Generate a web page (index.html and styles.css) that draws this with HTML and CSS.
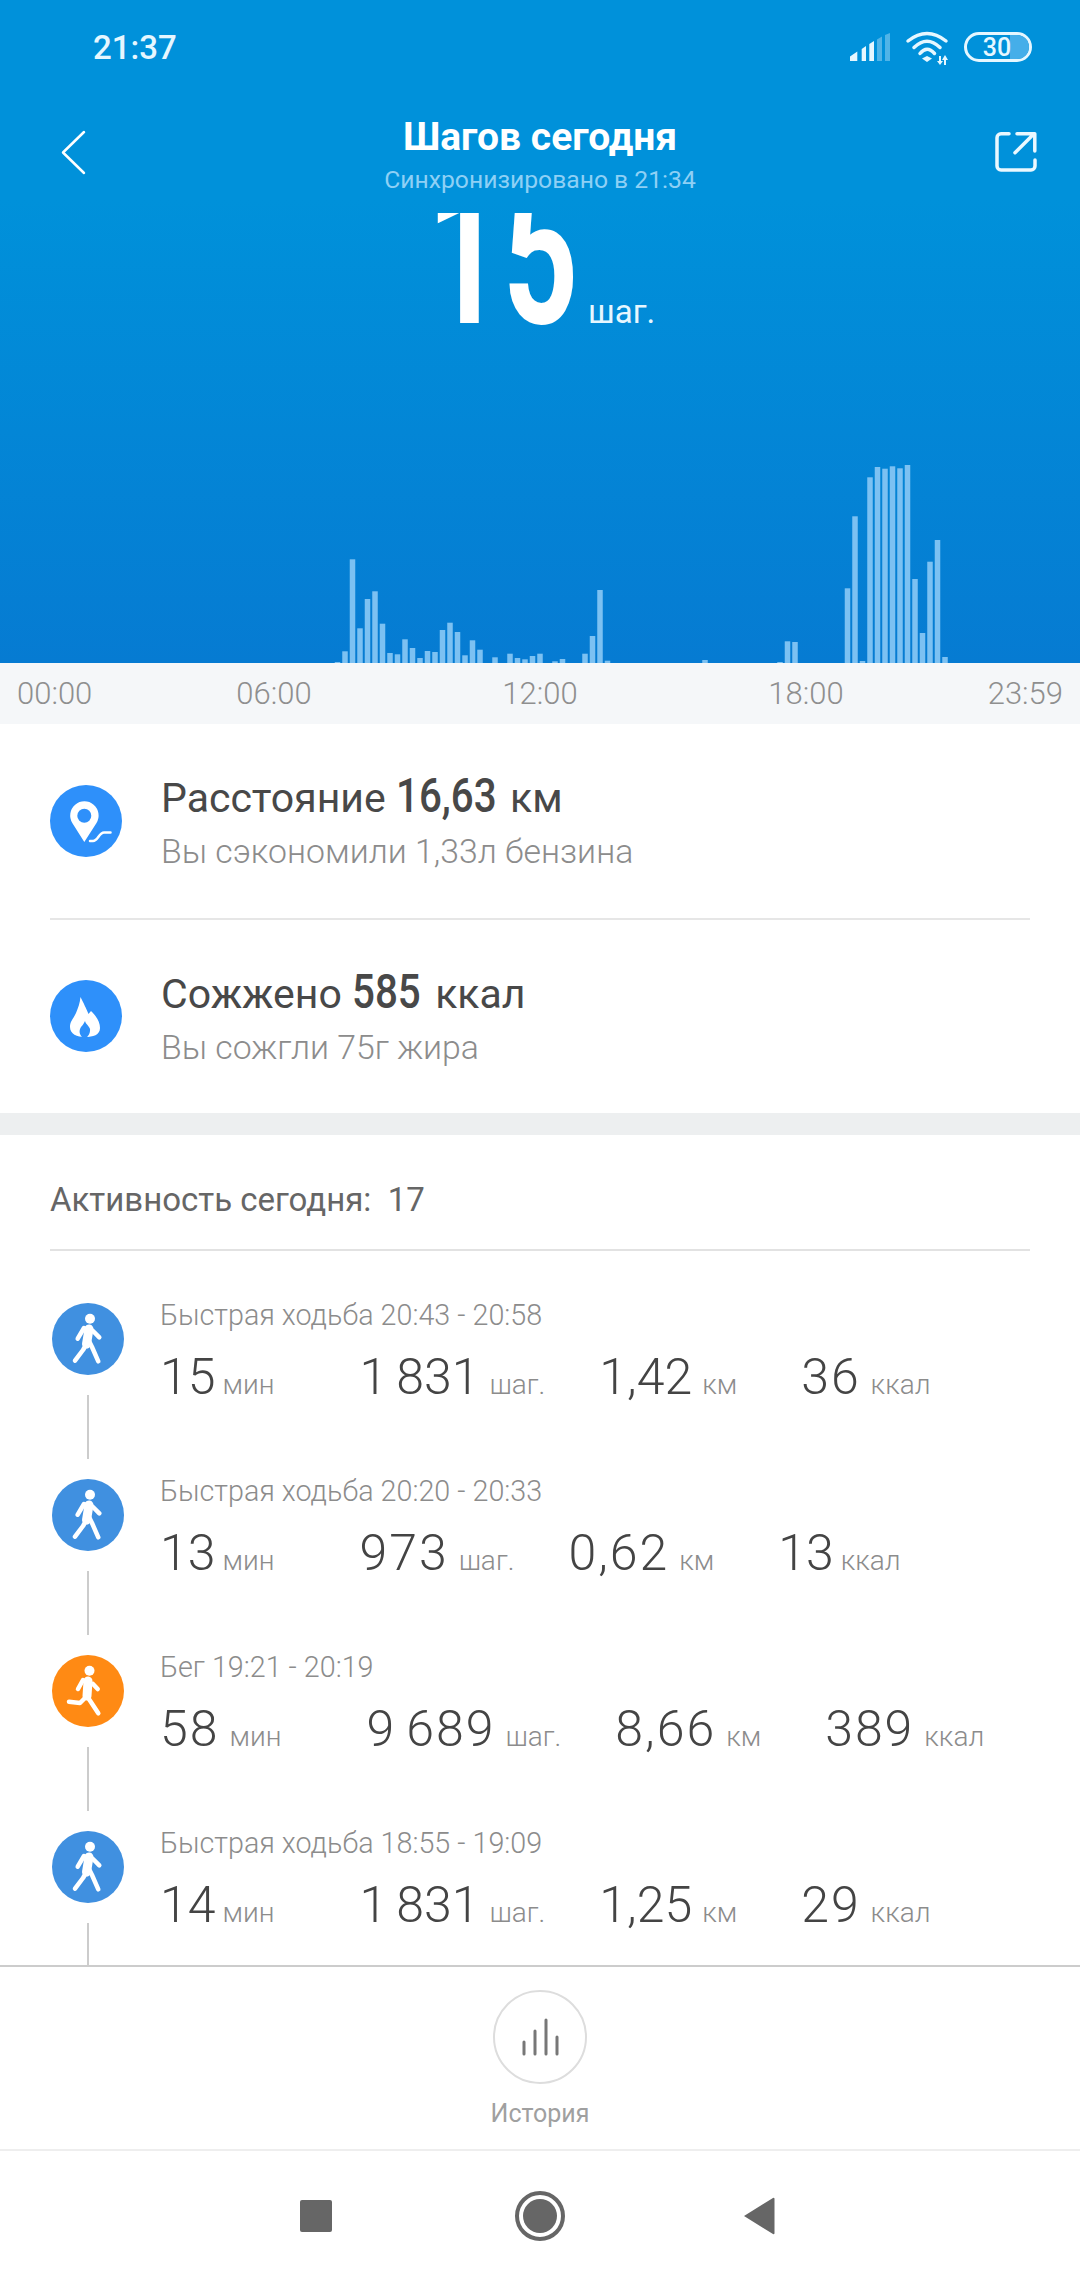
FILE: index.html
```html
<!DOCTYPE html>
<html lang="ru">
<head>
    <meta charset="UTF-8">
    <meta name="viewport" content="width=device-width, initial-scale=1.0">
    <title>Шагов сегодня</title>
    <link rel="stylesheet" href="styles.css">
</head>
<body>
<div class="phone">

    <header class="hero">
        <div class="status">
            <span class="status-time">21:37</span>
            <div class="status-icons">
                <svg class="ic-signal" viewBox="0 0 40 28">
                    <path d="M0 28V23.5L7.3 18.5V28z"/>
                    <path d="M11.7 28V16L16 13V28z"/>
                    <path d="M19.3 28V11L24 8V28z"/>
                    <path class="dim" d="M27 28V6.5L32 3.5V28z"/>
                    <path class="dim" d="M35 28V2L40 0V28z"/>
                </svg>
                <svg class="ic-wifi" viewBox="0 0 44 34">
                    <path class="arc" d="M2 9Q21 -6 40 9"/>
                    <path class="arc" d="M8 15.5Q21 3 34 15.5"/>
                    <path class="arc" d="M14 21.5Q21 13 28.5 21.5"/>
                    <path class="fill" d="M16 26.5L21 24L26 26.5L21 30z"/>
                    <path class="fill" d="M33 24h2v5h2l-3 4l-3 -4h2z"/>
                    <path class="fill" d="M38 33h2v-5h2l-3 -5l-3 5h2z"/>
                </svg>
                <div class="battery"><span class="battery-rest"></span><span class="battery-num">30</span></div>
            </div>
        </div>

        <div class="toolbar">
            <svg class="ic-back" viewBox="0 0 25 45"><path d="M23 2L2 22.5L23 43"/></svg>
            <div class="toolbar-title">
                <h1>Шагов сегодня</h1>
                <p>Синхронизировано в 21:34</p>
            </div>
            <svg class="ic-share" viewBox="0 0 42 42">
                <path d="M14 2.8H6a4 4 0 0 0-4 4V35a4 4 0 0 0 4 4H36a4 4 0 0 0 4-4V29"/>
                <path d="M20 21.7L39 2.8M22 2.8H39.8V20"/>
            </svg>
        </div>

        <div class="count">
            <span class="count-num">15</span>
            <span class="count-unit">шаг.</span>
        </div>

        <svg class="bars" viewBox="0 0 1080 200">
            <g transform="translate(-2.75 0)">
                <rect x="337.5" y="199" height="1"/>
                <rect x="345" y="188.3" height="11.7"/>
                <rect x="352.5" y="96.3" height="103.7"/>
                <rect x="360" y="165.3" height="34.7"/>
                <rect x="367.5" y="136" height="64"/>
                <rect x="375" y="128.3" height="71.7"/>
                <rect x="382.5" y="160.7" height="39.3"/>
                <rect x="390" y="190" height="10"/>
                <rect x="397.5" y="191.3" height="8.7"/>
                <rect x="405" y="176.3" height="23.7"/>
                <rect x="412.5" y="185" height="15"/>
                <rect x="420" y="195" height="5"/>
                <rect x="427.5" y="188" height="12"/>
                <rect x="435" y="189" height="11"/>
                <rect x="442.5" y="167" height="33"/>
                <rect x="450" y="159.7" height="40.3"/>
                <rect x="457.5" y="169" height="31"/>
                <rect x="465" y="192.3" height="7.7"/>
                <rect x="472.5" y="177.3" height="22.7"/>
                <rect x="480" y="186.7" height="13.3"/>
                <rect x="495" y="194.3" height="5.7"/>
                <rect x="510" y="190.7" height="9.3"/>
                <rect x="517.5" y="195" height="5"/>
                <rect x="525" y="196.3" height="3.7"/>
                <rect x="532.5" y="193" height="7"/>
                <rect x="540" y="190.7" height="9.3"/>
                <rect x="555" y="198.3" height="1.7"/>
                <rect x="562.5" y="196" height="4"/>
                <rect x="585" y="190.7" height="9.3"/>
                <rect x="592.5" y="173" height="27"/>
                <rect x="600" y="127" height="73"/>
                <rect x="607.5" y="197.7" height="2.3"/>
                <rect x="705" y="197" height="3"/>
                <rect x="780" y="199" height="1"/>
                <rect x="787.5" y="178.3" height="21.7"/>
                <rect x="795" y="179" height="21"/>
                <rect x="847.5" y="125.3" height="74.7"/>
                <rect x="855" y="53.3" height="146.7"/>
                <rect x="862.5" y="198" height="2"/>
                <rect x="870" y="14.3" height="185.7"/>
                <rect x="877.5" y="4" height="196"/>
                <rect x="885" y="5.7" height="194.3"/>
                <rect x="892.5" y="3.3" height="196.7"/>
                <rect x="900" y="5.3" height="194.7"/>
                <rect x="907.5" y="2" height="198"/>
                <rect x="915" y="116" height="84"/>
                <rect x="922.5" y="170" height="30"/>
                <rect x="930" y="98.7" height="101.3"/>
                <rect x="937.5" y="77" height="123"/>
                <rect x="945" y="194" height="6"/>
            </g>
        </svg>
    </header>

    <div class="axis">
        <span>00:00</span>
        <span>06:00</span>
        <span>12:00</span>
        <span>18:00</span>
        <span>23:59</span>
    </div>

    <section class="stats">
        <div class="stat">
            <svg class="stat-icon" viewBox="0 0 72 72">
                <circle class="disc" cx="36" cy="36" r="36"/>
                <path class="glyph" d="M34.3 57L22.3 38A14.2 14.2 0 1 1 46.5 38z"/>
                <circle class="disc" cx="34.3" cy="30.7" r="7"/>
                <path class="curve" d="M40 56h3c5 0 6-8.5 11-8.5h6.5"/>
            </svg>
            <div>
                <div class="stat-title">Расстояние <b class="val-dist">16,63</b> км</div>
                <div class="stat-sub">Вы сэкономили 1,33л бензина</div>
            </div>
        </div>
        <div class="stat">
            <svg class="stat-icon" viewBox="0 0 72 72">
                <circle class="disc" cx="36" cy="36" r="36"/>
                <path class="glyph" d="M30.5 17C34 24 36 28 38.5 34L41 31C47 37 50 42 50 48C50 55 43 57 35 57C27 57 20 54 20 47C20 41 24 38 26 33C28 28 30 23 30.5 17z"/>
                <path class="disc" d="M35 41C36 45 41 47 40 51C39.5 55 37 57 37 57H32C29 54 29 50 31 47C33 45 34 43 35 41z"/>
            </svg>
            <div>
                <div class="stat-title">Сожжено <b class="val-cal">585</b> ккал</div>
                <div class="stat-sub">Вы сожгли 75г жира</div>
            </div>
        </div>
    </section>

    <div class="band"></div>

    <section class="activity">
        <div class="activity-head">Активность сегодня:&nbsp; 17</div>

        <div class="activity-row">
            <div class="timeline">
                <svg class="act-icon walk" viewBox="0 0 72 72"><use href="#walker"/></svg>
                <span class="timeline-line"></span>
            </div>
            <div class="act-body">
                <div class="act-title">Быстрая ходьба 20:43 - 20:58</div>
                <div class="metrics">
                    <div class="metric"><span class="num num-teen">15</span><span class="unit">мин</span></div>
                    <div class="metric"><span class="num num-one">1 831</span><span class="unit">шаг.</span></div>
                    <div class="metric"><span class="num num-one">1,42</span><span class="unit">км</span></div>
                    <div class="metric"><span class="num">36</span><span class="unit">ккал</span></div>
                </div>
            </div>
        </div>

        <div class="activity-row">
            <div class="timeline">
                <svg class="act-icon walk" viewBox="0 0 72 72"><use href="#walker"/></svg>
                <span class="timeline-line"></span>
            </div>
            <div class="act-body">
                <div class="act-title">Быстрая ходьба 20:20 - 20:33</div>
                <div class="metrics">
                    <div class="metric"><span class="num num-teen">13</span><span class="unit">мин</span></div>
                    <div class="metric"><span class="num">973</span><span class="unit">шаг.</span></div>
                    <div class="metric"><span class="num">0,62</span><span class="unit">км</span></div>
                    <div class="metric"><span class="num num-teen">13</span><span class="unit">ккал</span></div>
                </div>
            </div>
        </div>

        <div class="activity-row">
            <div class="timeline">
                <svg class="act-icon run" viewBox="0 0 72 72">
                    <circle class="act-disc" cx="36" cy="36" r="36"/>
                    <circle class="act-fig" cx="37.5" cy="15.7" r="5"/>
                    <path class="act-torso" d="M36 26L35 41"/>
                    <path class="act-limb" d="M31 25L26 34M41 29L45.7 34M33 43L28 48L17 46.7M36.3 43L46.3 58.3"/>
                </svg>
                <span class="timeline-line"></span>
            </div>
            <div class="act-body">
                <div class="act-title">Бег 19:21 - 20:19</div>
                <div class="metrics">
                    <div class="metric"><span class="num">58</span><span class="unit">мин</span></div>
                    <div class="metric"><span class="num">9 689</span><span class="unit">шаг.</span></div>
                    <div class="metric"><span class="num">8,66</span><span class="unit">км</span></div>
                    <div class="metric"><span class="num">389</span><span class="unit">ккал</span></div>
                </div>
            </div>
        </div>

        <div class="activity-row">
            <div class="timeline">
                <svg class="act-icon walk" viewBox="0 0 72 72"><use href="#walker"/></svg>
                <span class="timeline-line"></span>
            </div>
            <div class="act-body">
                <div class="act-title">Быстрая ходьба 18:55 - 19:09</div>
                <div class="metrics">
                    <div class="metric"><span class="num num-teen">14</span><span class="unit">мин</span></div>
                    <div class="metric"><span class="num num-one">1 831</span><span class="unit">шаг.</span></div>
                    <div class="metric"><span class="num num-one">1,25</span><span class="unit">км</span></div>
                    <div class="metric"><span class="num">29</span><span class="unit">ккал</span></div>
                </div>
            </div>
        </div>
    </section>

    <div class="history">
        <div class="history-btn">
            <svg class="ic-history" viewBox="0 0 38 38">
                <path d="M3 36V24M14 36V13M25 36V2M36 36V19"/>
            </svg>
        </div>
        <span class="history-label">История</span>
    </div>

    <nav class="navbar">
        <span class="nav-square"></span>
        <span class="nav-ring"></span>
        <svg class="nav-back" viewBox="0 0 32 38"><path d="M1 19L30 1a1 1 0 0 1 1.5 1V36a1 1 0 0 1-1.5 1z"/></svg>
    </nav>

    <svg class="defs" width="0" height="0">
        <symbol id="walker" viewBox="0 0 72 72">
            <circle class="act-disc" cx="36" cy="36" r="36"/>
            <circle class="act-fig" cx="38" cy="15.7" r="5"/>
            <path class="act-torso" d="M37 26L34.5 41"/>
            <path class="act-limb" d="M32 25L25.7 35.7M41 28L47.3 34.3M34.5 41L31 47L23 57.7M37 38L40 44L46.3 58.3"/>
        </symbol>
    </svg>

</div>
</body>
</html>
```

FILE: styles.css
```css
* {
    box-sizing: border-box;
}
body {
    margin: 0;
    font-family: Roboto, "Noto Sans", sans-serif;
    background: #fff;
}
.phone {
    width: 1080px;
    height: 2280px;
    display: flex;
    flex-direction: column;
    overflow: hidden;
}

/* Entete bleu */
.hero {
    height: 663px;
    flex: none;
    display: flex;
    flex-direction: column;
    background: linear-gradient(#0091da, #0091da 200px, #067bd2);
    color: #fff;
}
.status {
    height: 70px;
    flex: none;
    display: flex;
    justify-content: space-between;
    align-items: center;
    padding: 0 48px 0 93px;
}
.status-time {
    font-size: 33px;
    font-weight: 500;
    color: #e6f7ff;
    padding-top: 24px;
}
.status-icons {
    display: flex;
    align-items: flex-start;
    padding-top: 24px;
    height: 70px;
}
.ic-signal {
    width: 40px;
    height: 28px;
    margin-top: 9px;
    fill: #e6f7ff;
}
.ic-signal .dim {
    opacity: 0.35;
}
.ic-wifi {
    width: 44px;
    height: 34px;
    margin: 8px 0 0 16px;
    overflow: visible;
}
.ic-wifi .arc {
    fill: none;
    stroke: #e6f7ff;
    stroke-width: 3.5;
    stroke-linecap: round;
}
.ic-wifi .fill {
    fill: #e6f7ff;
}
.battery {
    position: relative;
    width: 68px;
    height: 30px;
    margin: 8px 0 0 14px;
    border: 3px solid #e6f7ff;
    border-radius: 15px;
    overflow: hidden;
    display: flex;
    align-items: center;
    justify-content: center;
}
.battery-rest {
    position: absolute;
    top: 0;
    right: 0;
    bottom: 0;
    width: 19px;
    background: #45aee9;
}
.battery-num {
    position: relative;
    font-size: 25px;
    font-weight: 500;
    color: #e6f7ff;
    margin-right: 2px;
}

.toolbar {
    height: 143px;
    flex: none;
    display: grid;
    grid-template-columns: 1fr auto 1fr;
    align-items: start;
    padding: 0 43px;
}
.ic-back {
    width: 25px;
    height: 45px;
    margin: 60px 0 0 18px;
    fill: none;
    stroke: #fff;
    stroke-width: 2.5;
    stroke-linecap: round;
    stroke-linejoin: round;
}
.ic-share {
    width: 42px;
    height: 42px;
    margin-top: 61px;
    justify-self: end;
    fill: none;
    stroke: #eaf8ff;
    stroke-width: 3.5;
    stroke-linecap: round;
    stroke-linejoin: round;
}
.toolbar-title {
    text-align: center;
}
.toolbar-title h1 {
    margin: 0;
    padding-top: 44px;
    font-size: 39px;
    line-height: 46px;
    font-weight: 700;
}
.toolbar-title p {
    margin: 0;
    padding-top: 5px;
    font-size: 24.7px;
    line-height: 30px;
    font-weight: 400;
    color: #8ed0f5;
}

.count {
    height: 118px;
    flex: none;
    overflow: hidden;
    display: flex;
    align-items: baseline;
    padding-left: 427px;
}
.count-num {
    display: block;
    width: 161px;
    font-size: 200px;
    line-height: 83px;
    font-weight: 700;
    transform-origin: left;
    transform: scaleX(0.66);
}
.count-unit {
    font-size: 33px;
    font-weight: 400;
    color: #e6f7ff;
}
.bars {
    display: block;
    width: 1080px;
    height: 200px;
    margin-top: auto;
}
.bars rect {
    width: 5.5px;
    fill: #7cc1f2;
}

/* Axe des heures */
.axis {
    height: 61px;
    flex: none;
    display: grid;
    grid-template-columns: 1fr 266px 266px 266px 1fr;
    align-items: center;
    padding: 0 17px;
    background: #f5f7f9;
    font-size: 31px;
    font-weight: 300;
    color: #8f8f8f;
    text-align: center;
}
.axis span:first-child {
    text-align: left;
}
.axis span:last-child {
    text-align: right;
}

/* Distance et calories */
.stats {
    height: 389px;
    flex: none;
    display: flex;
    flex-direction: column;
    padding: 0 50px;
}
.stat {
    flex: 1;
    display: flex;
    align-items: center;
    gap: 39px;
}
.stat:first-child {
    border-bottom: 2px solid #e6e6e6;
}
.stat-icon {
    width: 72px;
    height: 72px;
    flex: none;
}
.disc {
    fill: #2e90fa;
}
.glyph {
    fill: #fff;
}
.curve {
    fill: none;
    stroke: #fff;
    stroke-width: 2.5;
    stroke-linecap: round;
}
.stat-title {
    font-size: 41px;
    line-height: 54px;
    color: #484848;
    padding-top: 7px;
}
.stat-title b {
    display: inline-block;
    font-size: 48px;
    font-weight: 500;
    transform-origin: left;
    transform: scaleX(0.84);
}
.val-dist {
    width: 104px;
}
.val-cal {
    width: 73px;
}
.stat-sub {
    font-size: 33.8px;
    line-height: 54px;
    font-weight: 300;
    color: #8c8c8c;
}

.band {
    height: 22px;
    flex: none;
    background: #edeff0;
}

/* Activite */
.activity {
    flex: 1;
    min-height: 0;
    overflow: hidden;
}
.activity-head {
    height: 116px;
    margin: 0 50px 52px;
    padding-top: 43px;
    font-size: 33px;
    line-height: 44px;
    color: #666;
    border-bottom: 2px solid #e2e2e2;
}
.activity-row {
    height: 176px;
    display: flex;
    padding-left: 52px;
}
.timeline {
    width: 72px;
    flex: none;
    display: flex;
    flex-direction: column;
    align-items: center;
}
.act-icon {
    width: 72px;
    height: 72px;
    flex: none;
}
.timeline-line {
    width: 2px;
    height: 64px;
    flex: none;
    margin-top: 20px;
    background: #ccc;
}
.activity-row:last-child .timeline-line {
    height: 100px;
}
.act-disc {
    fill: #4090e0;
}
.run .act-disc {
    fill: #ff8a14;
}
.act-fig {
    fill: #fff;
}
.act-torso {
    fill: none;
    stroke: #fff;
    stroke-width: 9;
    stroke-linecap: round;
}
.act-limb {
    fill: none;
    stroke: #fff;
    stroke-width: 4.5;
    stroke-linecap: round;
    stroke-linejoin: round;
}
.act-body {
    margin-left: 36px;
}
.act-title {
    font-size: 28.7px;
    line-height: 30px;
    font-weight: 300;
    color: #8c8c8c;
    margin-top: -3px;
}
.metrics {
    display: flex;
    align-items: baseline;
    margin-top: 17px;
}
.metric {
    display: flex;
    align-items: baseline;
    gap: 10px;
}
.metric:nth-child(2) {
    margin-left: 85px;
}
.metric:nth-child(3) {
    margin-left: 54px;
}
.metric:nth-child(4) {
    margin-left: 64px;
}
.num {
    font-size: 50px;
    line-height: 60px;
    font-weight: 300;
    letter-spacing: 2px;
    word-spacing: -4px;
    color: #444;
}
/* le 1 est plus etroit dans la capture */
.num-one {
    letter-spacing: 0;
    word-spacing: -3px;
}
.num-teen {
    letter-spacing: 0;
    margin-right: -3px;
}
.unit {
    font-size: 28px;
    font-weight: 300;
    color: #8c8c8c;
}

/* Bas de page */
.history {
    height: 186px;
    flex: none;
    display: flex;
    flex-direction: column;
    align-items: center;
    border-top: 2px solid #ccc;
    border-bottom: 2px solid #eee;
    background: #fff;
}
.history-btn {
    width: 94px;
    height: 94px;
    margin-top: 23px;
    border: 2px solid #ddd;
    border-radius: 50%;
    display: flex;
    align-items: center;
    justify-content: center;
}
.ic-history {
    width: 38px;
    height: 38px;
    fill: none;
    stroke: #777;
    stroke-width: 3;
    stroke-linecap: round;
}
.history-label {
    margin-top: 15px;
    font-size: 25px;
    line-height: 30px;
    color: #a0a0a0;
}
.navbar {
    height: 129px;
    flex: none;
    display: flex;
    justify-content: center;
    align-items: center;
    gap: 182px;
    padding-right: 6px;
}
.nav-square {
    width: 32px;
    height: 32px;
    border-radius: 2px;
    background: #666;
}
.nav-ring {
    width: 50px;
    height: 50px;
    margin-left: 1px;
    border-radius: 50%;
    border: 4px solid #666;
    padding: 4px;
    background: #666 content-box;
}
.nav-back {
    width: 32px;
    height: 38px;
    margin-left: -4px;
    fill: #666;
}
.defs {
    position: absolute;
}
```
